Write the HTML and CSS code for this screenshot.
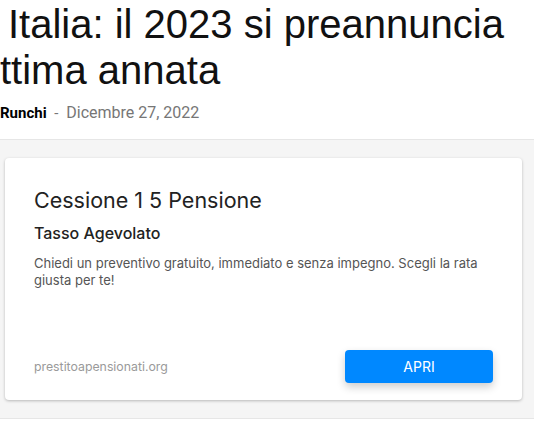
FILE: index.html
```html
<!DOCTYPE html>
<html lang="it">
<head>
    <meta charset="UTF-8">
    <meta name="viewport" content="width=device-width, initial-scale=1.0">
    <title>Italia: il 2023 si preannuncia ottima annata</title>
    <link rel="stylesheet" href="styles.css">
</head>
<body>
    <header class="post-header">
        <h1 class="post-title">
            <span class="title-line first">Italia: il 2023 si preannuncia</span>
            <span class="title-line">ttima annata</span>
        </h1>
        <div class="post-meta">
            <span class="author">Runchi</span>
            <span class="sep">-</span>
            <span class="date">Dicembre 27, 2022</span>
        </div>
    </header>

    <!-- Annuncio -->
    <div class="ad-area">
        <div class="ad-card">
            <h2 class="ad-title">Cessione 1 5 Pensione</h2>
            <h3 class="ad-subtitle">Tasso Agevolato</h3>
            <p class="ad-text">Chiedi un preventivo gratuito, immediato e senza impegno. Scegli la rata giusta per te!</p>
            <div class="ad-footer">
                <span class="ad-url">prestitoapensionati.org</span>
                <button class="ad-button">APRI</button>
            </div>
        </div>
    </div>
</body>
</html>
```

FILE: styles.css
```css
body {
    margin: 0;
    padding: 0;
    background-color: #ffffff;
    font-family: "Liberation Sans", Arial, sans-serif;
    overflow: hidden;
}

.post-header {
    padding: 0 0 16px 0;
    border-bottom: 1px solid #e6e6e6;
}

.post-title {
    margin: 0;
    font-size: 40px;
    font-weight: normal;
    line-height: 46px;
    color: #111111;
    padding-top: 1px;
}

.title-line {
    display: block;
    white-space: nowrap;
}

.title-line.first {
    padding-left: 8px;
}

.post-meta {
    margin-top: 10px;
    font-family: Roboto, sans-serif;
    font-size: 15px;
    line-height: 20px;
    color: #767676;
}

.author {
    color: #000000;
    font-weight: bold;
}

.sep {
    margin: 0 4px;
}

.date {
    font-size: 16px;
}

.ad-area {
    background-color: #f5f5f5;
    padding: 18px 12px 18px 5px;
    border-bottom: 1px solid #e6e6e6;
}

.ad-card {
    background-color: #ffffff;
    border-radius: 4px;
    box-shadow: 0 1px 3px rgba(0, 0, 0, 0.25);
    padding: 28px 29px 17px 29px;
    height: 197px;
    display: flex;
    flex-direction: column;
    font-family: Inter, Roboto, sans-serif;
}

.ad-title {
    margin: 0;
    font-size: 21.5px;
    font-weight: normal;
    line-height: 28px;
    color: #222222;
}

.ad-subtitle {
    margin: 9px 0 0 0;
    font-size: 16px;
    font-weight: 500;
    line-height: 20px;
    color: #222222;
}

.ad-text {
    margin: 12px 0 0 0;
    font-size: 13px;
    line-height: 17px;
    color: #555555;
}

.ad-footer {
    margin-top: auto;
    display: flex;
    align-items: center;
    justify-content: space-between;
}

.ad-url {
    font-size: 12.3px;
    color: #9a9a9a;
}

.ad-button {
    width: 148px;
    height: 33px;
    background-color: #0088ff;
    color: #ffffff;
    border: none;
    border-radius: 4px;
    font-family: Inter, Roboto, sans-serif;
    font-size: 14px;
    box-shadow: 0 4px 8px rgba(0, 0, 0, 0.2);
    cursor: pointer;
}
```
